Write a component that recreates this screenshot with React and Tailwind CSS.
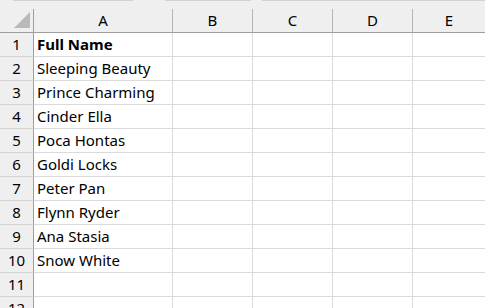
const names = [
  "Sleeping Beauty",
  "Prince Charming",
  "Cinder Ella",
  "Poca Hontas",
  "Goldi Locks",
  "Peter Pan",
  "Flynn Ryder",
  "Ana Stasia",
  "Snow White",
];

const cols = ["A", "B", "C", "D", "E"];

function Corner() {
  return (
    <div className="flex h-6 items-end justify-end border-r border-b border-r-[#9e9e9e] border-b-[#9e9e9e] bg-[#efefef] pr-[3px] pb-[4px]">
      <svg width="16" height="16" viewBox="0 0 16 16">
        <polygon points="16,0 16,16 0,16" fill="#b9b9b9" />
      </svg>
    </div>
  );
}

function ColHead({ label, last }) {
  return (
    <div
      className={
        "flex h-6 items-center justify-center border-b border-b-[#9e9e9e] bg-[#efefef] text-[15px] text-black " +
        (last ? "" : "border-r border-r-[#b4b4b4]")
      }
    >
      {label}
    </div>
  );
}

function RowHead({ n }) {
  return (
    <div className="flex h-6 items-center justify-center border-r border-b border-r-[#9e9e9e] border-b-[#d4d4d4] bg-[#efefef] text-[15px] text-black">
      {n}
    </div>
  );
}

function Cell({ children, bold, last }) {
  return (
    <div
      className={
        "flex h-6 items-center overflow-hidden whitespace-nowrap border-b border-b-[#dadada] pl-[3px] text-[15px] text-black " +
        (bold ? "font-bold " : "") +
        (last ? "" : "border-r border-r-[#dadada]")
      }
    >
      {children}
    </div>
  );
}

export default function App() {
  const rows = [["Full Name", true], ...names.map((n) => [n, false]), ["", false], ["", false]];

  return (
    <div
      className="h-[308px] w-[485px] overflow-hidden bg-white"
      style={{ fontFamily: '"Noto Sans", sans-serif' }}
    >
      <div className="flex h-[9px] bg-[#efefef]">
        <div className="w-[13px]" />
        <div className="w-[120px] border-t border-t-[#d2d2d2]" />
        <div className="w-[32px]" />
        <div className="w-[86px] border-t border-t-[#d2d2d2]" />
        <div className="w-[11px]" />
        <div className="flex-1 border-t border-t-[#d2d2d2]" />
      </div>

      <div className="grid grid-cols-[34px_139px_80px_80px_80px_1fr] leading-none">
        <Corner />
        {cols.map((c, i) => (
          <ColHead key={c} label={c} last={i === cols.length - 1} />
        ))}

        {rows.map(([text, bold], i) => (
          <div key={i} className="contents">
            <RowHead n={i + 1} />
            <Cell bold={bold}>{text}</Cell>
            <Cell />
            <Cell />
            <Cell />
            <Cell last />
          </div>
        ))}
      </div>
    </div>
  );
}
